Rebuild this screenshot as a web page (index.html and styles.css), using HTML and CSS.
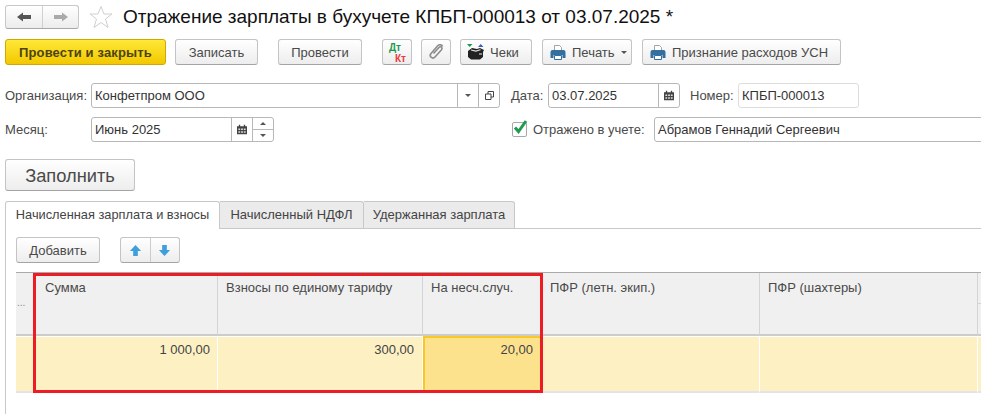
FILE: index.html
```html
<!DOCTYPE html>
<html lang="ru">
<head>
    <meta charset="UTF-8">
    <title>Отражение зарплаты в бухучете</title>
    <link rel="stylesheet" href="styles.css">
</head>
<body>
    <div class="page">
        <div class="title-row">
            <div class="nav-group">
                <button class="nav-btn nav-back">
                    <svg width="14" height="10" viewBox="0 0 14 10"><path d="M0 5 6 .5V3h8v4H6v2.500z" fill="#555"/></svg>
                </button>
                <button class="nav-btn">
                    <svg width="14" height="10" viewBox="0 0 14 10"><path d="M14 5 8 .5V3H0v4h8v2.500z" fill="#aaa"/></svg>
                </button>
            </div>
            <svg class="star" width="24" height="24" viewBox="0 0 24 24"><path d="M12 1.500 15 9h8l-6.500 5 2.500 8.500-7-5-7 5 2.500-8.500L1 9h8z" fill="#fff" stroke="#d0d0d0"/></svg>
            <h1 class="title-text">Отражение зарплаты в бухучете КПБП-000013 от 03.07.2025 *</h1>
        </div>

        <div class="toolbar">
            <button class="btn btn-main">Провести и закрыть</button>
            <button class="btn btn-save">Записать</button>
            <button class="btn btn-post">Провести</button>
            <button class="btn btn-dtkt"><span class="dt">Дт</span><span class="kt">Кт</span></button>
            <button class="btn btn-clip">
                <svg width="18" height="18" viewBox="0 0 18 18"><path d="M6.500 10.500 12 4.500c1.700-1.800 4 .3 2.500 2.200L8 14c-2.300 2.500-6.200-.3-4.200-3.200L10.500 3c2-2.200 4.800-1 5 .5" fill="none" stroke="#8c8c8c" stroke-width="1.600"/></svg>
            </button>
            <button class="btn btn-check btn-left">
                <svg width="17" height="16" viewBox="0 0 17 16"><path d="M0 0h5.500L2.750 3z" fill="#1a9a50"/><path d="M11 3h5.500L13.750 0z" fill="#3a62b0"/><path d="M1 7l4-3 5 1 3-1 4 2-1 2v5l-3 2.500H4L1 13z" fill="#222"/><path d="M4 5.500l5 1 4-1.200 1 .8-5 1.600-5-1.200z" fill="#e8e8e8"/><rect x="12" y="9" width="3" height="2" fill="#888"/></svg>
                <span class="btn-text">Чеки</span>
            </button>
            <button class="btn btn-print btn-left">
                <svg width="16" height="15" viewBox="0 0 16 15"><use href="#print-icon"/></svg>
                <span class="btn-text">Печать</span>
                <span class="caret"></span>
            </button>
            <button class="btn btn-report btn-left">
                <svg width="16" height="15" viewBox="0 0 16 15"><use href="#print-icon"/></svg>
                <span class="btn-text">Признание расходов УСН</span>
            </button>
        </div>

        <div class="form-row row-org">
            <label class="field-label label-left">Организация:</label>
            <div class="field field-org">
                <span class="field-value">Конфетпром ООО</span>
                <span class="field-btn"><span class="caret"></span></span>
                <span class="field-btn">
                    <svg width="9" height="9" viewBox="0 0 9 9"><path d="M3 3V.5h5.500V6H6M.5 3H6v5.500H.5z" fill="none" stroke="#444"/></svg>
                </span>
            </div>
            <label class="field-label label-date">Дата:</label>
            <div class="field field-date">
                <span class="field-value">03.07.2025</span>
                <span class="field-btn">
                    <svg width="10" height="11" viewBox="0 0 11 11"><use href="#calendar-icon"/></svg>
                </span>
            </div>
            <label class="field-label label-num">Номер:</label>
            <div class="field field-num"><span class="field-value">КПБП-000013</span></div>
        </div>

        <div class="form-row row-month">
            <label class="field-label label-left">Месяц:</label>
            <div class="field field-month">
                <span class="field-value">Июнь 2025</span>
                <span class="field-btn">
                    <svg width="10" height="11" viewBox="0 0 11 11"><use href="#calendar-icon"/></svg>
                </span>
                <span class="spin">
                    <span class="spin-part"><span class="caret caret-up"></span></span>
                    <span class="spin-part"><span class="caret"></span></span>
                </span>
            </div>
            <span class="checkbox">
                <svg class="check-mark" width="15" height="16" viewBox="0 0 15 16"><path d="M2 8.500l3.500 4L13 2" fill="none" stroke="#1f9a50" stroke-width="3"/></svg>
            </span>
            <label class="field-label label-check">Отражено в учете:</label>
            <div class="field field-person"><span class="field-value">Абрамов Геннадий Сергеевич</span></div>
        </div>

        <button class="btn btn-fill">Заполнить</button>

        <div class="tabs">
            <div class="tab tab-active tab-first">Начисленная зарплата и взносы</div>
            <div class="tab tab-second">Начисленный НДФЛ</div>
            <div class="tab tab-third">Удержанная зарплата</div>
        </div>

        <div class="tab-panel">
            <div class="panel-tools">
                <button class="btn btn-add">Добавить</button>
                <div class="arrow-group">
                    <button class="arrow-btn">
                        <svg width="13" height="13" viewBox="0 0 14 14"><path d="M7 1l6 6.500H9.500V13h-5V7.500H1z" fill="#3f9fdc"/></svg>
                    </button>
                    <button class="arrow-btn">
                        <svg width="13" height="13" viewBox="0 0 14 14"><path d="M7 13l6-6.500H9.500V1h-5v5.500H1z" fill="#3f9fdc"/></svg>
                    </button>
                </div>
            </div>

            <div class="grid">
                <div class="head head-mark"><span class="dots">...</span></div>
                <div class="head head-sum">Сумма</div>
                <div class="head">Взносы по единому тарифу</div>
                <div class="head">На несч.случ.</div>
                <div class="head">ПФР (летн. экип.)</div>
                <div class="head">ПФР (шахтеры)</div>
                <div class="head head-last"><span class="head-split"></span></div>

                <div class="cell"></div>
                <div class="cell cell-sum">1 000,00</div>
                <div class="cell">300,00</div>
                <div class="cell cell-current">20,00</div>
                <div class="cell"></div>
                <div class="cell"></div>
                <div class="cell"></div>
            </div>
        </div>

        <div class="red-box"></div>
    </div>

    <svg class="icon-defs" width="0" height="0">
        <symbol id="print-icon" viewBox="0 0 16 15">
            <path d="M4.500.5h5l2 2v4h-7z" fill="#fff" stroke="#9aa5ae"/>
            <path d="M.5 7q0-2 2-2h11q2 0 2 2v6h-3v-3h-9v3H.5z" fill="#33709f"/>
            <path d="M4.500 10.500h7v4h-7z" fill="#fff" stroke="#33709f"/>
        </symbol>
        <symbol id="calendar-icon" viewBox="0 0 11 11">
            <path d="M0 2h11v9H0z" fill="#444"/>
            <path d="M2 0h1.500v3H2zM7.500 0H9v3H7.500z" fill="#444"/>
            <path d="M1.500 4.500h2v1.500h-2zM4.500 4.500h2v1.500h-2zM7.500 4.500h2v1.500h-2zM1.500 7.500h2v1.500h-2zM4.500 7.500h2v1.500h-2zM7.500 7.500h2v1.500h-2z" fill="#ddd"/>
        </symbol>
    </svg>
</body>
</html>
```

FILE: styles.css
```css
html, body {
    margin: 0;
    padding: 0;
    background-color: #ffffff;
    overflow: hidden;
}

.page {
    position: relative;
    width: 981px;
    height: 414px;
    padding: 5px 0 0 5px;
    box-sizing: border-box;
    overflow: hidden;
    font-family: "Liberation Sans", Arial, sans-serif;
    font-size: 13px;
    color: #4a4a4a;
}

.icon-defs {
    position: absolute;
}

button {
    font-family: inherit;
    font-size: inherit;
    color: inherit;
    padding: 0;
    margin: 0;
}

/* Title */
.title-row {
    display: flex;
    align-items: center;
    height: 24px;
}

.nav-group {
    display: flex;
    flex: none;
    width: 74px;
    height: 24px;
    box-sizing: border-box;
    border: 1px solid #c8c8c8;
    border-bottom-color: #a8a8a8;
    border-radius: 3px;
    background: linear-gradient(#ffffff, #ececec);
}

.nav-btn {
    flex: 1;
    border: none;
    background: none;
    display: flex;
    align-items: center;
    justify-content: center;
}

.nav-back {
    flex: none;
    width: 36px;
}

.nav-btn + .nav-btn {
    border-left: 1px solid #d0d0d0;
}

.star {
    flex: none;
    margin-left: 10px;
}

.title-text {
    margin: 0 0 0 10px;
    font-size: 19px;
    font-weight: normal;
    color: #111111;
    white-space: nowrap;
}

/* Buttons */
.toolbar {
    display: flex;
    margin-top: 10px;
    height: 26px;
}

.btn {
    display: flex;
    flex: none;
    align-items: center;
    justify-content: center;
    gap: 6px;
    height: 26px;
    box-sizing: border-box;
    border: 1px solid #c4c4c4;
    border-bottom-color: #a4a4a4;
    border-radius: 3px;
    background: linear-gradient(#ffffff, #ededed);
    white-space: nowrap;
}

.btn-left {
    justify-content: flex-start;
    padding-left: 7px;
    gap: 6px;
}

.btn-main {
    width: 161px;
    border-color: #d0a800;
    background: linear-gradient(#ffe838, #f2c800);
    color: #4d4410;
    font-weight: bold;
    letter-spacing: 0.15px;
}

.btn-save {
    width: 83px;
    margin-left: 9px;
}

.btn-post {
    width: 84px;
    margin-left: 20px;
}

.btn-dtkt {
    position: relative;
    width: 30px;
    margin-left: 20px;
}

.dt, .kt {
    position: absolute;
    font-size: 10px;
    font-weight: bold;
    line-height: 9px;
}

.dt {
    left: 6px;
    top: 3px;
    color: #1a9a50;
}

.kt {
    left: 12px;
    top: 14px;
    color: #e83c3c;
}

.btn-clip {
    width: 30px;
    margin-left: 9px;
}

.btn-check {
    width: 72px;
    margin-left: 9px;
    gap: 6px;
    padding-left: 6px;
}

.btn-print {
    width: 90px;
    margin-left: 10px;
}

.btn-report {
    width: 199px;
    margin-left: 10px;
}

.caret {
    display: inline-block;
    width: 0;
    height: 0;
    border-left: 3px solid transparent;
    border-right: 3px solid transparent;
    border-top: 3px solid #555555;
}

.caret-up {
    border-top: none;
    border-bottom: 3px solid #555555;
}

/* Form */
.form-row {
    display: flex;
    align-items: center;
    height: 25px;
}

.row-org {
    margin-top: 18px;
}

.row-month {
    margin-top: 9px;
}

.field-label {
    flex: none;
    white-space: nowrap;
}

.label-left {
    width: 86px;
}

.label-date {
    margin-left: 11px;
    width: 37px;
}

.label-num {
    margin-left: 10px;
    width: 48px;
}

.label-check {
    margin-left: 6px;
    width: 121px;
}

.field {
    display: flex;
    flex: none;
    height: 25px;
    box-sizing: border-box;
    border: 1px solid #b8b8b8;
    border-radius: 3px;
    background-color: #ffffff;
    color: #333333;
}

.field-value {
    flex: 1;
    padding-left: 3px;
    line-height: 23px;
    white-space: nowrap;
}

.field-btn {
    width: 20px;
    border-left: 1px solid #b8b8b8;
    display: flex;
    align-items: center;
    justify-content: center;
}

.field-org {
    width: 409px;
}

.field-date {
    width: 132px;
}

.field-num {
    width: 121px;
    border-color: #dddddd;
}

.field-month {
    width: 183px;
}

.field-person {
    width: 340px;
}

.spin {
    width: 20px;
    border-left: 1px solid #b8b8b8;
    display: flex;
    flex-direction: column;
}

.spin-part {
    flex: 1;
    display: flex;
    align-items: center;
    justify-content: center;
}

.spin-part + .spin-part {
    border-top: 1px solid #b8b8b8;
}

.checkbox {
    position: relative;
    flex: none;
    width: 15px;
    height: 15px;
    margin-left: 238px;
    border: 1px solid #a8a8a8;
    border-radius: 2px;
    box-sizing: border-box;
}

.check-mark {
    position: absolute;
    left: 0;
    top: -4px;
}

.btn-fill {
    width: 130px;
    height: 32px;
    margin-top: 17px;
    font-size: 18.300px;
    padding-top: 1px;
}

/* Tabs */
.tabs {
    display: flex;
    margin-top: 10px;
    height: 27px;
    border-bottom: 1px solid #c8c8c8;
}

.tab {
    flex: none;
    height: 27px;
    box-sizing: border-box;
    line-height: 25px;
    text-align: center;
    border: 1px solid #c8c8c8;
    border-left: none;
    border-bottom: none;
    background-color: #ebebeb;
    border-radius: 0 3px 0 0;
    color: #444444;
    white-space: nowrap;
}

.tab-first {
    width: 215px;
    border-left: 1px solid #c8c8c8;
    border-radius: 3px 3px 0 0;
    font-size: 12.800px;
}

.tab-active {
    background-color: #ffffff;
    height: 28px;
}

.tab-second {
    width: 144px;
}

.tab-third {
    width: 151px;
}

.tab-panel {
    border-left: 1px solid #c8c8c8;
    height: 186px;
    padding: 8px 0 0 10px;
    box-sizing: border-box;
}

.panel-tools {
    display: flex;
}

.btn-add {
    width: 84px;
}

.arrow-group {
    display: flex;
    width: 60px;
    height: 26px;
    margin-left: 20px;
    box-sizing: border-box;
    border: 1px solid #c4c4c4;
    border-bottom-color: #a4a4a4;
    border-radius: 3px;
    background: linear-gradient(#ffffff, #ededed);
}

.arrow-btn {
    flex: 1;
    border: none;
    background: none;
    display: flex;
    align-items: center;
    justify-content: center;
}

.arrow-btn + .arrow-btn {
    border-left: 1px solid #cccccc;
}

/* Table */
.grid {
    display: grid;
    grid-template-columns: 19px 183px 205px 119px 218px 218px 40px;
    grid-template-rows: 63px 57px;
    margin-top: 9px;
    width: 1002px;
    border-top: 1px solid #aaaaaa;
}

.head {
    background-color: #f0f0f0;
    border-right: 1px solid #d4d4d4;
    border-bottom: 2px solid #cccccc;
    padding: 7px 8px;
    box-sizing: border-box;
    white-space: nowrap;
}

.head-mark {
    padding: 24px 0 0 1px;
    font-size: 10px;
    color: #888888;
}

.head-sum {
    padding-left: 10px;
}

.head-last {
    padding: 0;
}

.head-split {
    display: block;
    height: 30px;
    border-bottom: 1px solid #d4d4d4;
}

.cell {
    background-color: #fdf1c4;
    border-right: 1px solid #ffffff;
    border-top: 1px solid #ffffff;
    border-bottom: 2px solid #e4e4e4;
    padding: 5px 8px;
    box-sizing: border-box;
    text-align: right;
    color: #444444;
}

.cell-sum {
    padding-right: 7px;
}

.cell-current {
    background-color: #fde28e;
    border: 2px solid #f9c826;
    padding: 4px 7px;
}

/* Red highlight drawn over the table */
.red-box {
    position: absolute;
    left: 33px;
    top: 273px;
    width: 510px;
    height: 120px;
    box-sizing: border-box;
    border: 3px solid #ed1c24;
}
```
